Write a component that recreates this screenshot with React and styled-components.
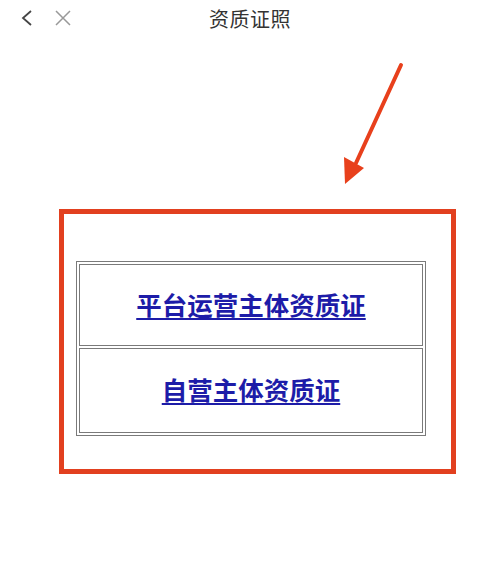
import React from 'react'
import styled, { createGlobalStyle } from 'styled-components'

const Global = createGlobalStyle`
  html, body {
    margin: 0;
    padding: 0;
    background: #fff;
    font-family: "Noto Sans CJK SC", "Noto Sans", sans-serif;
  }
`

const Page = styled.div`
  width: 500px;
  height: 578px;
  overflow: hidden;
  background: #fff;
`

const Header = styled.div`
  position: relative;
  height: 38px;
  display: flex;
  align-items: center;
  justify-content: center;
`

const NavIcons = styled.div`
  position: absolute;
  left: 19px;
  top: 8px;
  display: flex;
  gap: 20px;
  align-items: center;
`

const Title = styled.div`
  font-size: 20px;
  color: #333;
  letter-spacing: 0.5px;
  margin-top: -2px;
`

const ArrowArea = styled.div`
  height: 171px;
`

const Frame = styled.div`
  margin-left: 59px;
  box-sizing: border-box;
  width: 397px;
  height: 265px;
  border: 5px solid #e2401f;
  padding: 47px 0 0 12px;
`

const Table = styled.table`
  width: 350px;
  border: 1px solid #7a7a7a;
  border-spacing: 2px;
`

const Cell = styled.td`
  border: 1px solid #7a7a7a;
  height: ${p => p.h}px;
  text-align: center;
  padding: 0 0 4px;
`

const Link = styled.a`
  font-size: 25.5px;
  font-weight: bold;
  color: #1d1ca8;
  text-decoration: underline;
  text-underline-offset: 3px;
  cursor: pointer;
`

export default function App() {
  return (
    <Page>
      <Global />
      <Header>
        <NavIcons>
          <svg width="16" height="20" viewBox="0 0 16 20">
            <path d="M12 3 L4 10 L12 17" fill="none" stroke="#444" strokeWidth="1.8" />
          </svg>
          <svg width="16" height="16" viewBox="0 0 16 16">
            <path d="M1 1 L15 15 M15 1 L1 15" fill="none" stroke="#999" strokeWidth="1.5" />
          </svg>
        </NavIcons>
        <Title>资质证照</Title>
      </Header>
      <ArrowArea>
        <svg width="500" height="171" viewBox="0 38 500 171">
          <line x1="401" y1="65" x2="356" y2="163" stroke="#e8401c" strokeWidth="4" strokeLinecap="round" />
          <polygon points="345,184 344,157 364,168" fill="#e8401c" />
        </svg>
      </ArrowArea>
      <Frame>
        <Table>
          <tbody>
            <tr>
              <Cell h={76}><Link>平台运营主体资质证</Link></Cell>
            </tr>
            <tr>
              <Cell h={79}><Link>自营主体资质证</Link></Cell>
            </tr>
          </tbody>
        </Table>
      </Frame>
    </Page>
  )
}
